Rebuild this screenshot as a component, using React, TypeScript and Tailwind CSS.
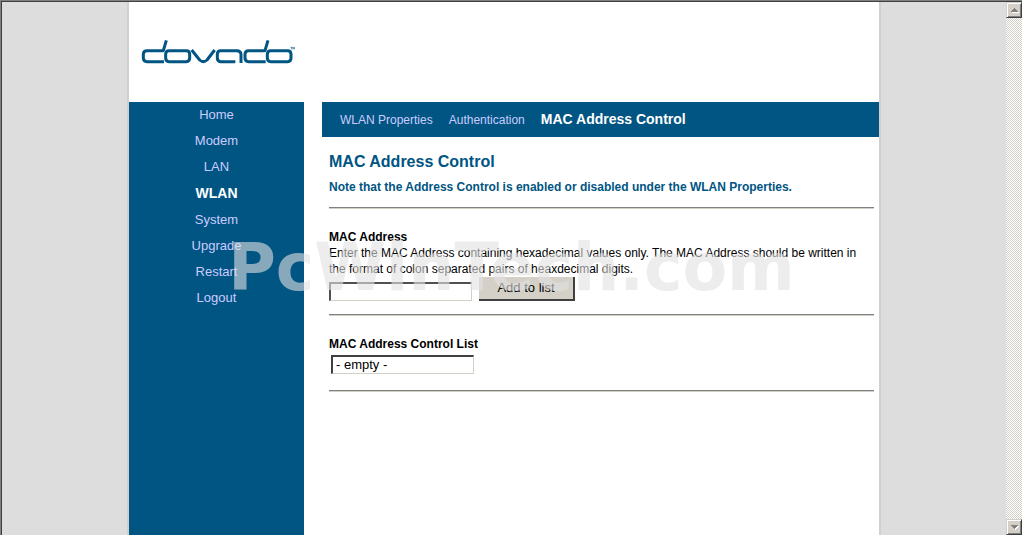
const sideItems = ['Home', 'Modem', 'LAN', 'WLAN', 'System', 'Upgrade', 'Restart', 'Logout'];
const tabs = ['WLAN Properties', 'Authentication', 'MAC Address Control'];

export default function App() {
  return (
    <div className="relative flex min-h-screen border-t border-l border-[#808080] bg-[#dddddd] font-['Liberation_Sans',Arial,sans-serif] text-black">
      <div className="flex flex-1 justify-center border-t border-l border-[#404040]">
        <div className="flex w-full max-w-[754px] border-x-2 border-[#d0d0d0]">
          <div className="flex flex-1 flex-col bg-white">
            <header className="h-[100px] px-3 pt-9">
              <Logo />
            </header>
            <div className="flex flex-1 gap-[18px]">
              <SideMenu />
              <main className="flex-1">
                <TabBar />
                <Content />
              </main>
            </div>
          </div>
        </div>
      </div>
      <ScrollBar />
      <Watermark />
    </div>
  );
}

function SideMenu() {
  return (
    <nav aria-label="Main" className="w-[175px] shrink-0 bg-[#005583]">
      <ul className="text-center text-[13px] leading-[26px] text-[#ccccff]">
        {sideItems.map((item) => (
          <li key={item}>
            <a href="#" className={item === 'WLAN' ? 'text-[14px] font-bold text-white' : ''}>
              {item}
            </a>
          </li>
        ))}
      </ul>
    </nav>
  );
}

function TabBar() {
  return (
    <nav
      aria-label="WLAN"
      className="flex h-[35px] items-center gap-4 bg-[#005583] px-[18px] text-[12px] text-[#ccccff]"
    >
      {tabs.map((tab) => (
        <a
          key={tab}
          href="#"
          className={tab === 'MAC Address Control' ? 'text-[14px] font-bold text-white' : ''}
        >
          {tab}
        </a>
      ))}
    </nav>
  );
}

function Content() {
  return (
    <div className="pt-4 pr-[5px] pl-[7px] text-[12px] leading-4">
      <h1 className="text-[16px] leading-[18px] font-bold text-[#005583]">MAC Address Control</h1>
      <p className="mt-2 font-bold text-[#005583]">
        Note that the Address Control is enabled or disabled under the WLAN Properties.
      </p>
      <Rule />

      <form className="pt-5 pb-px" onSubmit={(e) => e.preventDefault()}>
        <label htmlFor="mac" className="block font-bold">
          MAC Address
        </label>
        <p>
          Enter the MAC Address containing hexadecimal values only. The MAC Address should be written
          in the format of colon separated pairs of heaxdecimal digits.
        </p>
        <div className="flex items-end gap-[7px]">
          <input
            id="mac"
            type="text"
            className="h-[19px] w-[143px] border border-t-2 border-l-2 border-[#d4d0c8] border-t-[#505050] border-l-[#505050] bg-white px-1 text-[13px] outline-none"
          />
          <button
            type="submit"
            className="h-6 w-24 border-r-2 border-b-2 border-[#404040] bg-[#d4d0c8] text-[13px] leading-5"
          >
            Add to list
          </button>
        </div>
      </form>
      <Rule />

      <section className="pt-5 pb-1">
        <label htmlFor="mac-list" className="block font-bold">
          MAC Address Control List
        </label>
        <select
          id="mac-list"
          size={1}
          className="mt-[3px] ml-[2px] block h-[19px] w-[143px] appearance-none border border-t-2 border-l-2 border-[#d4d0c8] border-t-[#404040] border-l-[#404040] bg-white pl-[3px] text-[13px] leading-4 outline-none"
        >
          <option>- empty -</option>
        </select>
      </section>
      <Rule />
    </div>
  );
}

function Rule() {
  return <hr className="mt-3 border-t border-b border-t-[#808080] border-b-[#d4d0c8]" />;
}

function ScrollBar() {
  return (
    <div className="flex w-4 flex-col justify-between border-t border-[#404040] bg-[#d4d0c8] bg-[repeating-conic-gradient(#ffffff_0_25%,#d4d0c8_0_50%)] bg-size-[2px_2px]">
      <ScrollButton label="Scroll up" points="4,10 8,6 12,10" />
      <ScrollButton label="Scroll down" points="4,6 12,6 8,10" />
    </div>
  );
}

function ScrollButton({ label, points }: { label: string; points: string }) {
  return (
    <button
      type="button"
      aria-label={label}
      className="h-4 w-4 border border-[#404040] border-t-[#d4d0c8] border-l-[#d4d0c8] bg-[#d4d0c8] shadow-[inset_1px_1px_#ffffff,inset_-1px_-1px_#808080]"
    >
      <svg viewBox="1 1 14 14" className="block h-full w-full" shapeRendering="crispEdges">
        <polygon points={points} fill="#ffffff" transform="translate(1 1)" />
        <polygon points={points} fill="#808080" />
      </svg>
    </button>
  );
}

function Watermark() {
  return (
    <div className="pointer-events-none absolute inset-x-0 top-[230px] text-center font-['DejaVu_Sans',Verdana,sans-serif] text-[65px] leading-[74px] font-bold text-[#e1e1e1]/60">
      PcWinTech.com
    </div>
  );
}

function Logo() {
  return (
    <svg
      role="img"
      aria-label="dovado"
      viewBox="62 54 465 81"
      className="h-[27px] w-[155px]"
      fill="none"
      stroke="#005583"
      strokeWidth="9"
      strokeLinejoin="round"
    >
      <path d="M138 61l-9 31H80q-11 0-11 11v11q0 11 11 11h51" />
      <path d="M146 92h52q10 0 10 11v11q0 11-10 11h-52q-10 0-10-11v-11q0-11 10-11z" />
      <path d="M214 90l24 30q11 10 22 0l23-30" />
      <path d="M345 125h-44q-10 0-10-11v-11q0-11 10-11h48q13 0 13 12v25" />
      <path d="M443 61l-9 31h-49q-11 0-11 11v11q0 11 11 11h51" />
      <path d="M451 92h51q10 0 10 11v11q0 11-10 11h-51q-10 0-10-11v-11q0-11 10-11z" />
      <path d="M511 82h5M514 82v6M518 88v-6l2 3 2-3v6" strokeWidth="2" />
    </svg>
  );
}
